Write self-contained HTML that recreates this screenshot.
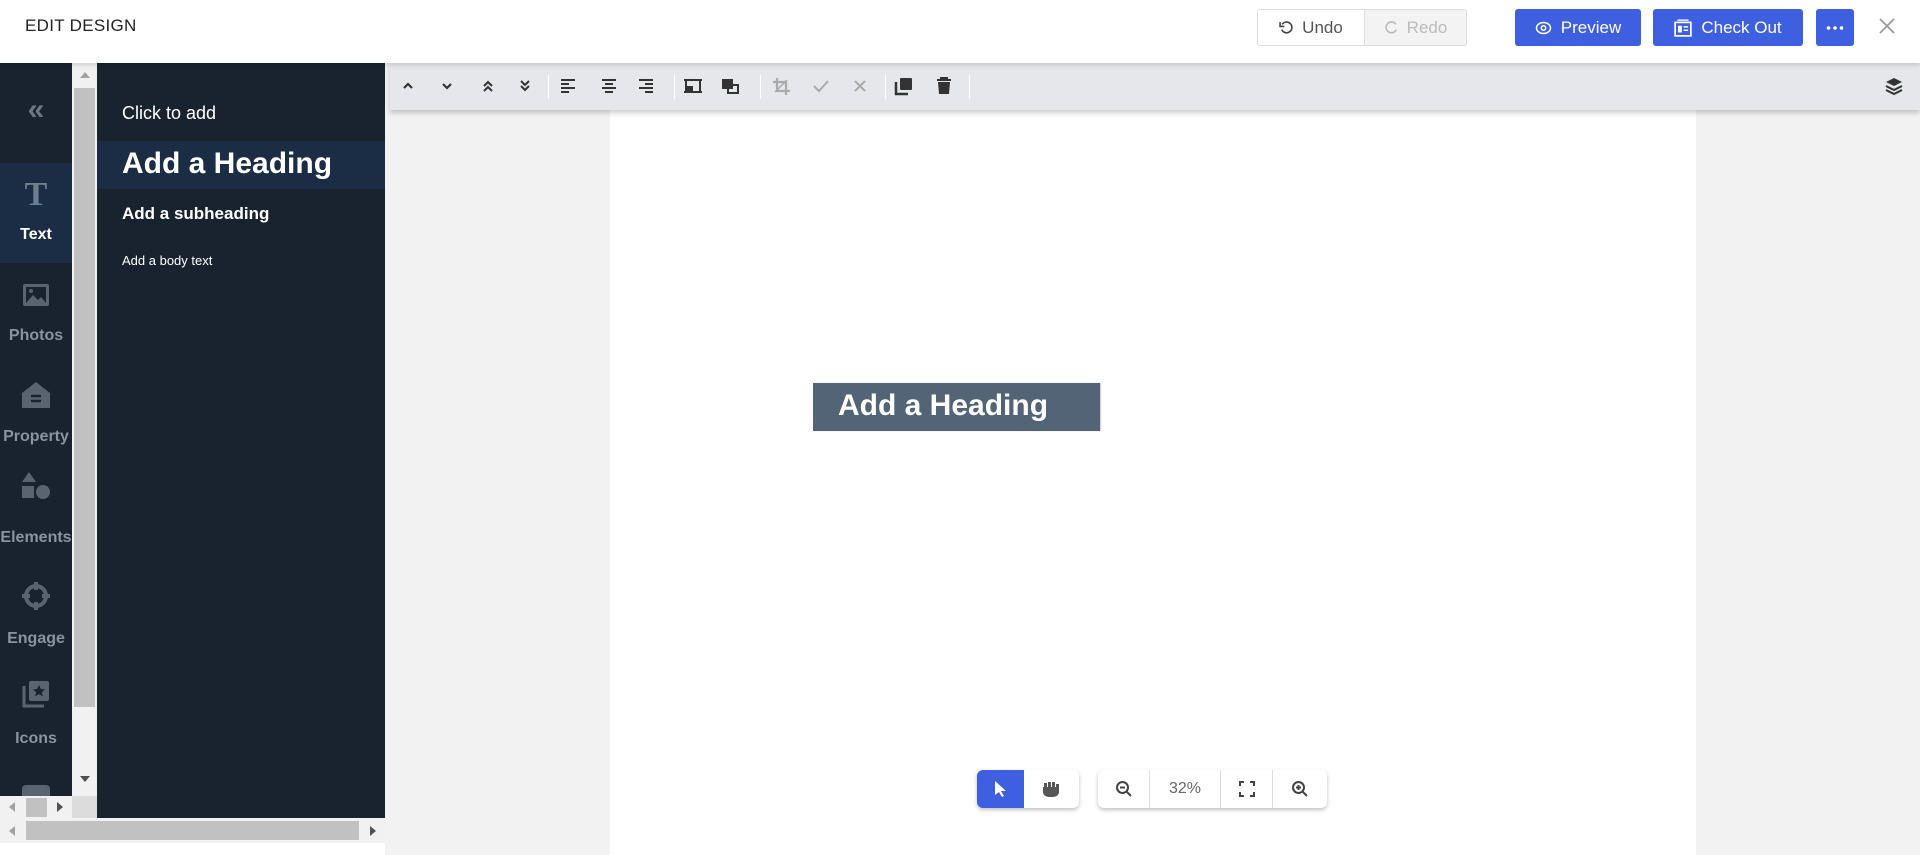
<!DOCTYPE html>
<html><head><meta charset="utf-8"><style>
*{box-sizing:border-box;margin:0;padding:0}
body{width:1920px;height:855px;overflow:hidden;background:#f2f2f2;font-family:"Liberation Sans",sans-serif;position:relative}
.abs{position:absolute}
.hdr{left:0;top:0;width:1920px;height:63px;background:#fff;box-shadow:0 2px 5px rgba(0,0,0,.15);z-index:5}
.btn{position:absolute;top:9px;height:37px;border-radius:3px;background:#3d5fe0;color:#fff;font-size:17px;display:flex;align-items:center;justify-content:center;gap:9px}
.rail{left:0;top:63px;width:72px;height:755px;background:#18232f;overflow:hidden}
.item{position:absolute;left:0;width:72px;text-align:center;color:#8a939e;font-weight:bold;font-size:16px}
.panel{left:97px;top:63px;width:288px;height:755px;background:#18232f;color:#fff}
.tb{left:390px;top:63px;width:1530px;height:47px;background:#e6e7ea;box-shadow:0 3px 5px rgba(0,0,0,.2);z-index:3}
.ti{position:absolute;top:12px;width:22px;height:22px;fill:#444}
.sep{position:absolute;top:12px;width:1px;height:24px;background:#fff}
</style></head><body>
<div class="abs hdr">
 <div class="abs" style="left:25px;top:16px;font-size:17px;color:#222;letter-spacing:.3px">EDIT DESIGN</div>
 <div class="abs" style="left:1257px;top:9px;width:210px;height:37px;border:1px solid #ddd;border-radius:3px;display:flex;overflow:hidden">
  <div style="width:106px;display:flex;align-items:center;justify-content:center;gap:8px;color:#555;font-size:17px;background:#fff"><svg width="15" height="15" viewBox="0 0 14 14"><path d="M3 4A5 5 0 1 1 2.5 9" fill="none" stroke="#444" stroke-width="1.5"/><path d="M1 2v4h4" fill="none" stroke="#444" stroke-width="1.5"/></svg>Undo</div>
  <div style="flex:1;display:flex;align-items:center;justify-content:center;gap:8px;color:#bbb;font-size:17px;background:#f3f3f3;border-left:1px solid #ddd"><svg width="15" height="15" viewBox="0 0 14 14"><path d="M11 4A5 5 0 1 0 11.5 9" fill="none" stroke="#bbb" stroke-width="1.5"/></svg>Redo</div>
 </div>
 <div class="btn" style="left:1515px;width:126px"><svg width="17" height="14" viewBox="0 0 16 14"><ellipse cx="8" cy="7" rx="7" ry="5.5" fill="none" stroke="#fff" stroke-width="1.5"/><circle cx="8" cy="7" r="2.2" fill="none" stroke="#fff" stroke-width="1.5"/></svg>Preview</div>
 <div class="btn" style="left:1653px;width:150px"><svg width="18" height="18" viewBox="0 0 16 16"><rect x="1" y="3" width="14" height="12" fill="none" stroke="#fff" stroke-width="1.5"/><path d="M3 1h10" stroke="#fff" stroke-width="1.2"/><rect x="3.5" y="6" width="3.5" height="6" fill="#fff"/><path d="M8.5 7h4M8.5 10h4" stroke="#fff" stroke-width="1.3"/></svg>Check Out</div>
 <div class="btn" style="left:1816px;width:38px"><svg width="18" height="4" viewBox="0 0 18 4"><circle cx="2.5" cy="2" r="1.8" fill="#fff"/><circle cx="9" cy="2" r="1.8" fill="#fff"/><circle cx="15.5" cy="2" r="1.8" fill="#fff"/></svg></div>
 <svg class="abs" style="left:1878px;top:17px" width="18" height="18" viewBox="0 0 18 18"><path d="M2 2L16 16M16 2L2 16" stroke="#999" stroke-width="1.8"/></svg>
</div>

<div class="abs rail">
 <div class="item" style="top:30px;font-size:30px;color:#6b7684">«</div>
 <div class="abs" style="left:0;top:100px;width:72px;height:100px;background:#1b2d45"></div>
 <div class="item" style="top:113px;font-family:'Liberation Serif',serif;font-size:34px;color:#6f7e8f">T</div>
 <div class="item" style="top:163px;color:#fff">Text</div>
 <svg class="abs" style="left:22px;top:220px" width="28" height="24" viewBox="0 0 28 24"><rect x="1" y="1" width="26" height="22" rx="2" fill="#5a6470"/><rect x="4" y="4" width="20" height="16" fill="#18232f"/><path d="M4 20l7-8 5 5 3-3 5 6z" fill="#5a6470"/><circle cx="9" cy="8" r="2" fill="#5a6470"/></svg>
 <div class="item" style="top:264px">Photos</div>
 <svg class="abs" style="left:21px;top:318px" width="30" height="28" viewBox="0 0 30 28"><path d="M15 1L1 12v15h28V12z" fill="#5a6470"/><path d="M10 15h10M10 20h10" stroke="#18232f" stroke-width="2.5"/></svg>
 <div class="item" style="top:365px">Property</div>
 <svg class="abs" style="left:21px;top:408px" width="30" height="30" viewBox="0 0 30 30"><path d="M8 1l7 10H1z" fill="#5a6470"/><rect x="1" y="15" width="12" height="12" fill="#5a6470"/><circle cx="22" cy="21" r="7" fill="#5a6470"/></svg>
 <div class="item" style="top:466px;left:-4px;width:80px">Elements</div>
 <svg class="abs" style="left:21px;top:518px" width="30" height="30" viewBox="0 0 30 30"><circle cx="15" cy="15" r="10" fill="none" stroke="#5a6470" stroke-width="4"/><path d="M15 1v8M15 21v8M1 15h8M21 15h8" stroke="#5a6470" stroke-width="4"/></svg>
 <div class="item" style="top:567px">Engage</div>
 <svg class="abs" style="left:22px;top:617px" width="28" height="28" viewBox="0 0 28 28"><path d="M2 6v20h20" fill="none" stroke="#5a6470" stroke-width="3"/><rect x="7" y="1" width="20" height="20" rx="2" fill="#5a6470"/><path d="M17 5l1.8 4 4.2.4-3.2 2.8 1 4.2-3.8-2.3-3.8 2.3 1-4.2-3.2-2.8 4.2-.4z" fill="#18232f"/></svg>
 <div class="item" style="top:667px">Icons</div>
 <div class="abs" style="left:22px;top:722px;width:28px;height:20px;background:#5a6470;border-radius:4px"></div>
</div>
<div class="abs" style="left:72px;top:63px;width:25px;height:755px;background:#f1f1f1"></div>
<div class="abs" style="left:80px;top:72px;border:5px solid transparent;border-bottom:6px solid #a3a3a3;border-top:0"></div>
<div class="abs" style="left:74px;top:88px;width:21px;height:619px;background:#c1c1c1"></div>
<div class="abs" style="left:80px;top:776px;border:5px solid transparent;border-top:6px solid #505050;border-bottom:0"></div>
<div class="abs" style="left:0;top:796px;width:97px;height:22px;background:#f1f1f1"></div>
<div class="abs" style="left:72px;top:796px;width:25px;height:22px;background:#dcdcdc"></div>
<div class="abs" style="left:26px;top:798px;width:21px;height:19px;background:#c1c1c1"></div>
<div class="abs" style="left:9px;top:802px;border:5px solid transparent;border-right:6px solid #a3a3a3;border-left:0"></div>
<div class="abs" style="left:57px;top:802px;border:5px solid transparent;border-left:6px solid #505050;border-right:0"></div>
<div class="abs" style="left:0;top:818px;width:385px;height:25px;background:#f1f1f1"></div>
<div class="abs" style="left:26px;top:821px;width:333px;height:19px;background:#c1c1c1"></div>
<div class="abs" style="left:9px;top:826px;border:5px solid transparent;border-right:6px solid #a3a3a3;border-left:0"></div>
<div class="abs" style="left:370px;top:826px;border:5px solid transparent;border-left:6px solid #505050;border-right:0"></div>
<div class="abs" style="left:0;top:843px;width:385px;height:12px;background:#fff"></div>

<div class="abs panel">
 <div class="abs" style="left:25px;top:40px;font-size:18px">Click to add</div>
 <div class="abs" style="left:0;top:78px;width:288px;height:48px;background:#1b2d45"></div>
 <div class="abs" style="left:25px;top:84px;font-size:30px;font-weight:bold">Add a Heading</div>
 <div class="abs" style="left:25px;top:141px;font-size:17px;font-weight:bold">Add a subheading</div>
 <div class="abs" style="left:25px;top:190px;font-size:13px">Add a body text</div>
</div>

<div class="abs" style="left:610px;top:63px;width:1086px;height:792px;background:#fff"></div>
<div class="abs" style="left:813px;top:383px;width:287px;height:48px;background:#536476;box-shadow:1px 0 1px #ccc"></div>
<div class="abs" style="left:838px;top:389px;font-size:30px;font-weight:bold;color:#fff">Add a Heading</div>

<div class="abs tb">
 <svg class="ti" style="left:7px" viewBox="0 0 22 22"><path d="M7 13l4-4 4 4" fill="none" stroke="#333" stroke-width="2.2"/></svg>
 <svg class="ti" style="left:46px" viewBox="0 0 22 22"><path d="M7 9l4 4 4-4" fill="none" stroke="#333" stroke-width="2.2"/></svg>
 <svg class="ti" style="left:87px" viewBox="0 0 22 22"><path d="M7 11l4-4 4 4M7 16l4-4 4 4" fill="none" stroke="#333" stroke-width="2"/></svg>
 <svg class="ti" style="left:124px" viewBox="0 0 22 22"><path d="M7 6l4 4 4-4M7 11l4 4 4-4" fill="none" stroke="#333" stroke-width="2"/></svg>
 <div class="sep" style="left:158px"></div>
 <svg class="ti" style="left:167px" viewBox="0 0 22 22"><path d="M4 5h14M4 9h8M4 13h14M4 17h8" stroke="#333" stroke-width="2"/></svg>
 <svg class="ti" style="left:208px" viewBox="0 0 22 22"><path d="M4 5h14M7 9h8M4 13h14M7 17h8" stroke="#333" stroke-width="2"/></svg>
 <svg class="ti" style="left:245px" viewBox="0 0 22 22"><path d="M4 5h14M10 9h8M4 13h14M10 17h8" stroke="#333" stroke-width="2"/></svg>
 <div class="sep" style="left:284px"></div>
 <svg class="ti" style="left:292px" viewBox="0 0 22 22"><rect x="4" y="5" width="14" height="12" fill="none" stroke="#333" stroke-width="2"/><rect x="4" y="11" width="7" height="6" fill="#333"/><path d="M2 5h4M16 5h4M2 17h4M16 17h4" stroke="#333" stroke-width="2"/></svg>
 <svg class="ti" style="left:329px" viewBox="0 0 22 22"><rect x="3" y="4" width="11" height="10" fill="#333"/><rect x="9" y="10" width="10" height="8" fill="none" stroke="#333" stroke-width="2"/></svg>
 <div class="sep" style="left:370px"></div>
 <svg class="ti" style="left:380px" viewBox="0 0 22 22"><path d="M7 3v13h13M3 7h13v13" fill="none" stroke="#aaa" stroke-width="2.2"/><path d="M5 17L17 5" stroke="#aaa" stroke-width="1.5"/></svg>
 <svg class="ti" style="left:420px" viewBox="0 0 22 22"><path d="M4 11l5 5 9-10" fill="none" stroke="#aaa" stroke-width="2"/></svg>
 <svg class="ti" style="left:459px" viewBox="0 0 22 22"><path d="M6 6l10 10M16 6L6 16" stroke="#aaa" stroke-width="2"/></svg>
 <div class="sep" style="left:495px"></div>
 <svg class="ti" style="left:503px" viewBox="0 0 22 22"><path d="M3 7v12h12" fill="none" stroke="#333" stroke-width="2.5"/><rect x="7" y="3" width="12" height="12" rx="1" fill="#333"/></svg>
 <svg class="ti" style="left:543px" viewBox="0 0 22 22"><path d="M4 5h14M8 5V3h6v2" fill="none" stroke="#333" stroke-width="2"/><path d="M5 7h12l-1 12H6z" fill="#333"/></svg>
 <div class="sep" style="left:579px"></div>
 <svg class="ti" style="left:1493px" viewBox="0 0 22 22"><path d="M11 3l8 4-8 4-8-4z" fill="#333"/><path d="M3 11l8 4 8-4M3 15l8 4 8-4" fill="none" stroke="#333" stroke-width="2"/></svg>
</div>

<div class="abs" style="left:977px;top:770px;width:102px;height:38px;border-radius:6px;background:#fff;box-shadow:0 2px 4px rgba(0,0,0,.25);overflow:hidden">
 <div class="abs" style="left:0;top:0;width:47px;height:38px;background:#3d5fe0"></div>
 <svg class="abs" style="left:16px;top:10px" width="14" height="18" viewBox="0 0 14 18"><path d="M2 1v14l4-3 3 5 2-1-3-5h5z" fill="#fff"/></svg>
 <svg class="abs" style="left:64px;top:11px" width="20" height="16" viewBox="0 0 20 16"><path d="M2 6h16v5c0 3-3 5-6 5H8c-3 0-6-2-6-5z M3 2h3v5H3zM7 1h3v6H7zM11 1h3v6h-3zM15 3h3v4h-3z" fill="#555"/></svg>
</div>
<div class="abs" style="left:1098px;top:770px;width:229px;height:38px;border-radius:6px;background:#fff;box-shadow:0 2px 4px rgba(0,0,0,.25);display:flex">
 <div style="width:52px;border-right:1px solid #ddd;display:flex;align-items:center;justify-content:center"><svg width="18" height="18" viewBox="0 0 18 18"><circle cx="7.5" cy="7.5" r="5.5" fill="none" stroke="#444" stroke-width="2"/><path d="M5 7.5h5M11.5 11.5l4.5 4.5" stroke="#444" stroke-width="2"/></svg></div>
 <div style="width:71px;border-right:1px solid #ddd;display:flex;align-items:center;justify-content:center;font-size:16px;color:#666">32%</div>
 <div style="width:52px;border-right:1px solid #ddd;display:flex;align-items:center;justify-content:center"><svg width="16" height="16" viewBox="0 0 16 16"><path d="M1 5V1h4M11 1h4v4M15 11v4h-4M5 15H1v-4" fill="none" stroke="#444" stroke-width="2"/></svg></div>
 <div style="flex:1;display:flex;align-items:center;justify-content:center"><svg width="18" height="18" viewBox="0 0 18 18"><circle cx="7.5" cy="7.5" r="5.5" fill="none" stroke="#444" stroke-width="2"/><path d="M5 7.5h5M7.5 5v5M11.5 11.5l4.5 4.5" stroke="#444" stroke-width="2"/></svg></div>
</div>
</body></html>
